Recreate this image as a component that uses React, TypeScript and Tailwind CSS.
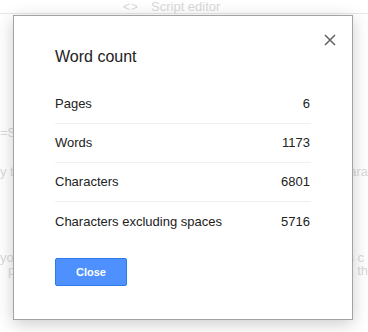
import React from 'react';

interface CountRow {
  label: string;
  value: string;
}

const rows: CountRow[] = [
  { label: 'Pages', value: '6' },
  { label: 'Words', value: '1173' },
  { label: 'Characters', value: '6801' },
  { label: 'Characters excluding spaces', value: '5716' },
];

export default function App() {
  return (
    <div className="relative h-[332px] w-[368px] overflow-hidden bg-white font-['Liberation_Sans',Arial,sans-serif]">
      {/* Faded document behind the dialog */}
      <div className="flex h-[14px] items-center border-b border-[#e8e8e8] pl-[123px] text-[13px] text-[#d8d8d8]">
        <span className="mr-[12px] text-[12px] tracking-[1px]">{'<>'}</span>
        <span>Script editor</span>
      </div>
      <div className="flex flex-col text-[13px] leading-[13px] text-[#dadada]">
        <div className="mt-[112px] flex justify-between">
          <span>=S</span>
        </div>
        <div className="mt-[26px] flex justify-between">
          <span>y t</span>
          <span>ara</span>
        </div>
        <div className="mt-[73px] flex justify-between">
          <span>yo</span>
          <span className="mr-[4px]">s c</span>
        </div>
        <div className="flex justify-between">
          <span className="ml-[8px]">p</span>
          <span>th</span>
        </div>
      </div>

      {/* Word count dialog */}
      <div className="absolute left-[13px] top-[15px] flex h-[305px] w-[340px] flex-col border border-[#a3a3a3] bg-white px-[41px] shadow-[0_4px_16px_rgba(0,0,0,0.2)]">
        <button className="absolute right-[15px] top-[17px] flex h-[14px] w-[14px] items-center justify-center text-[#666]">
          <svg width="12" height="12" viewBox="0 0 12 12">
            <path d="M1 1L11 11M11 1L1 11" stroke="currentColor" strokeWidth="1.6" />
          </svg>
        </button>
        <h2 className="mt-[32px] text-[16px] leading-[18px] text-[#222]">Word count</h2>
        <div className="mt-[19px] flex flex-col">
          {rows.map((row, i) => (
            <div
              key={row.label}
              className={`flex h-[39px] items-center justify-between text-[13px] text-[#222] ${
                i < rows.length - 1 ? 'border-b border-[#f0f0f0]' : ''
              }`}
            >
              <span>{row.label}</span>
              <span className="mr-[1px]">{row.value}</span>
            </div>
          ))}
        </div>
        <div className="mt-[17px]">
          <button className="h-[28px] w-[72px] rounded-[2px] border border-[#3079ed] bg-[#4d90fe] text-[11px] font-bold text-white">
            Close
          </button>
        </div>
      </div>
    </div>
  );
}
